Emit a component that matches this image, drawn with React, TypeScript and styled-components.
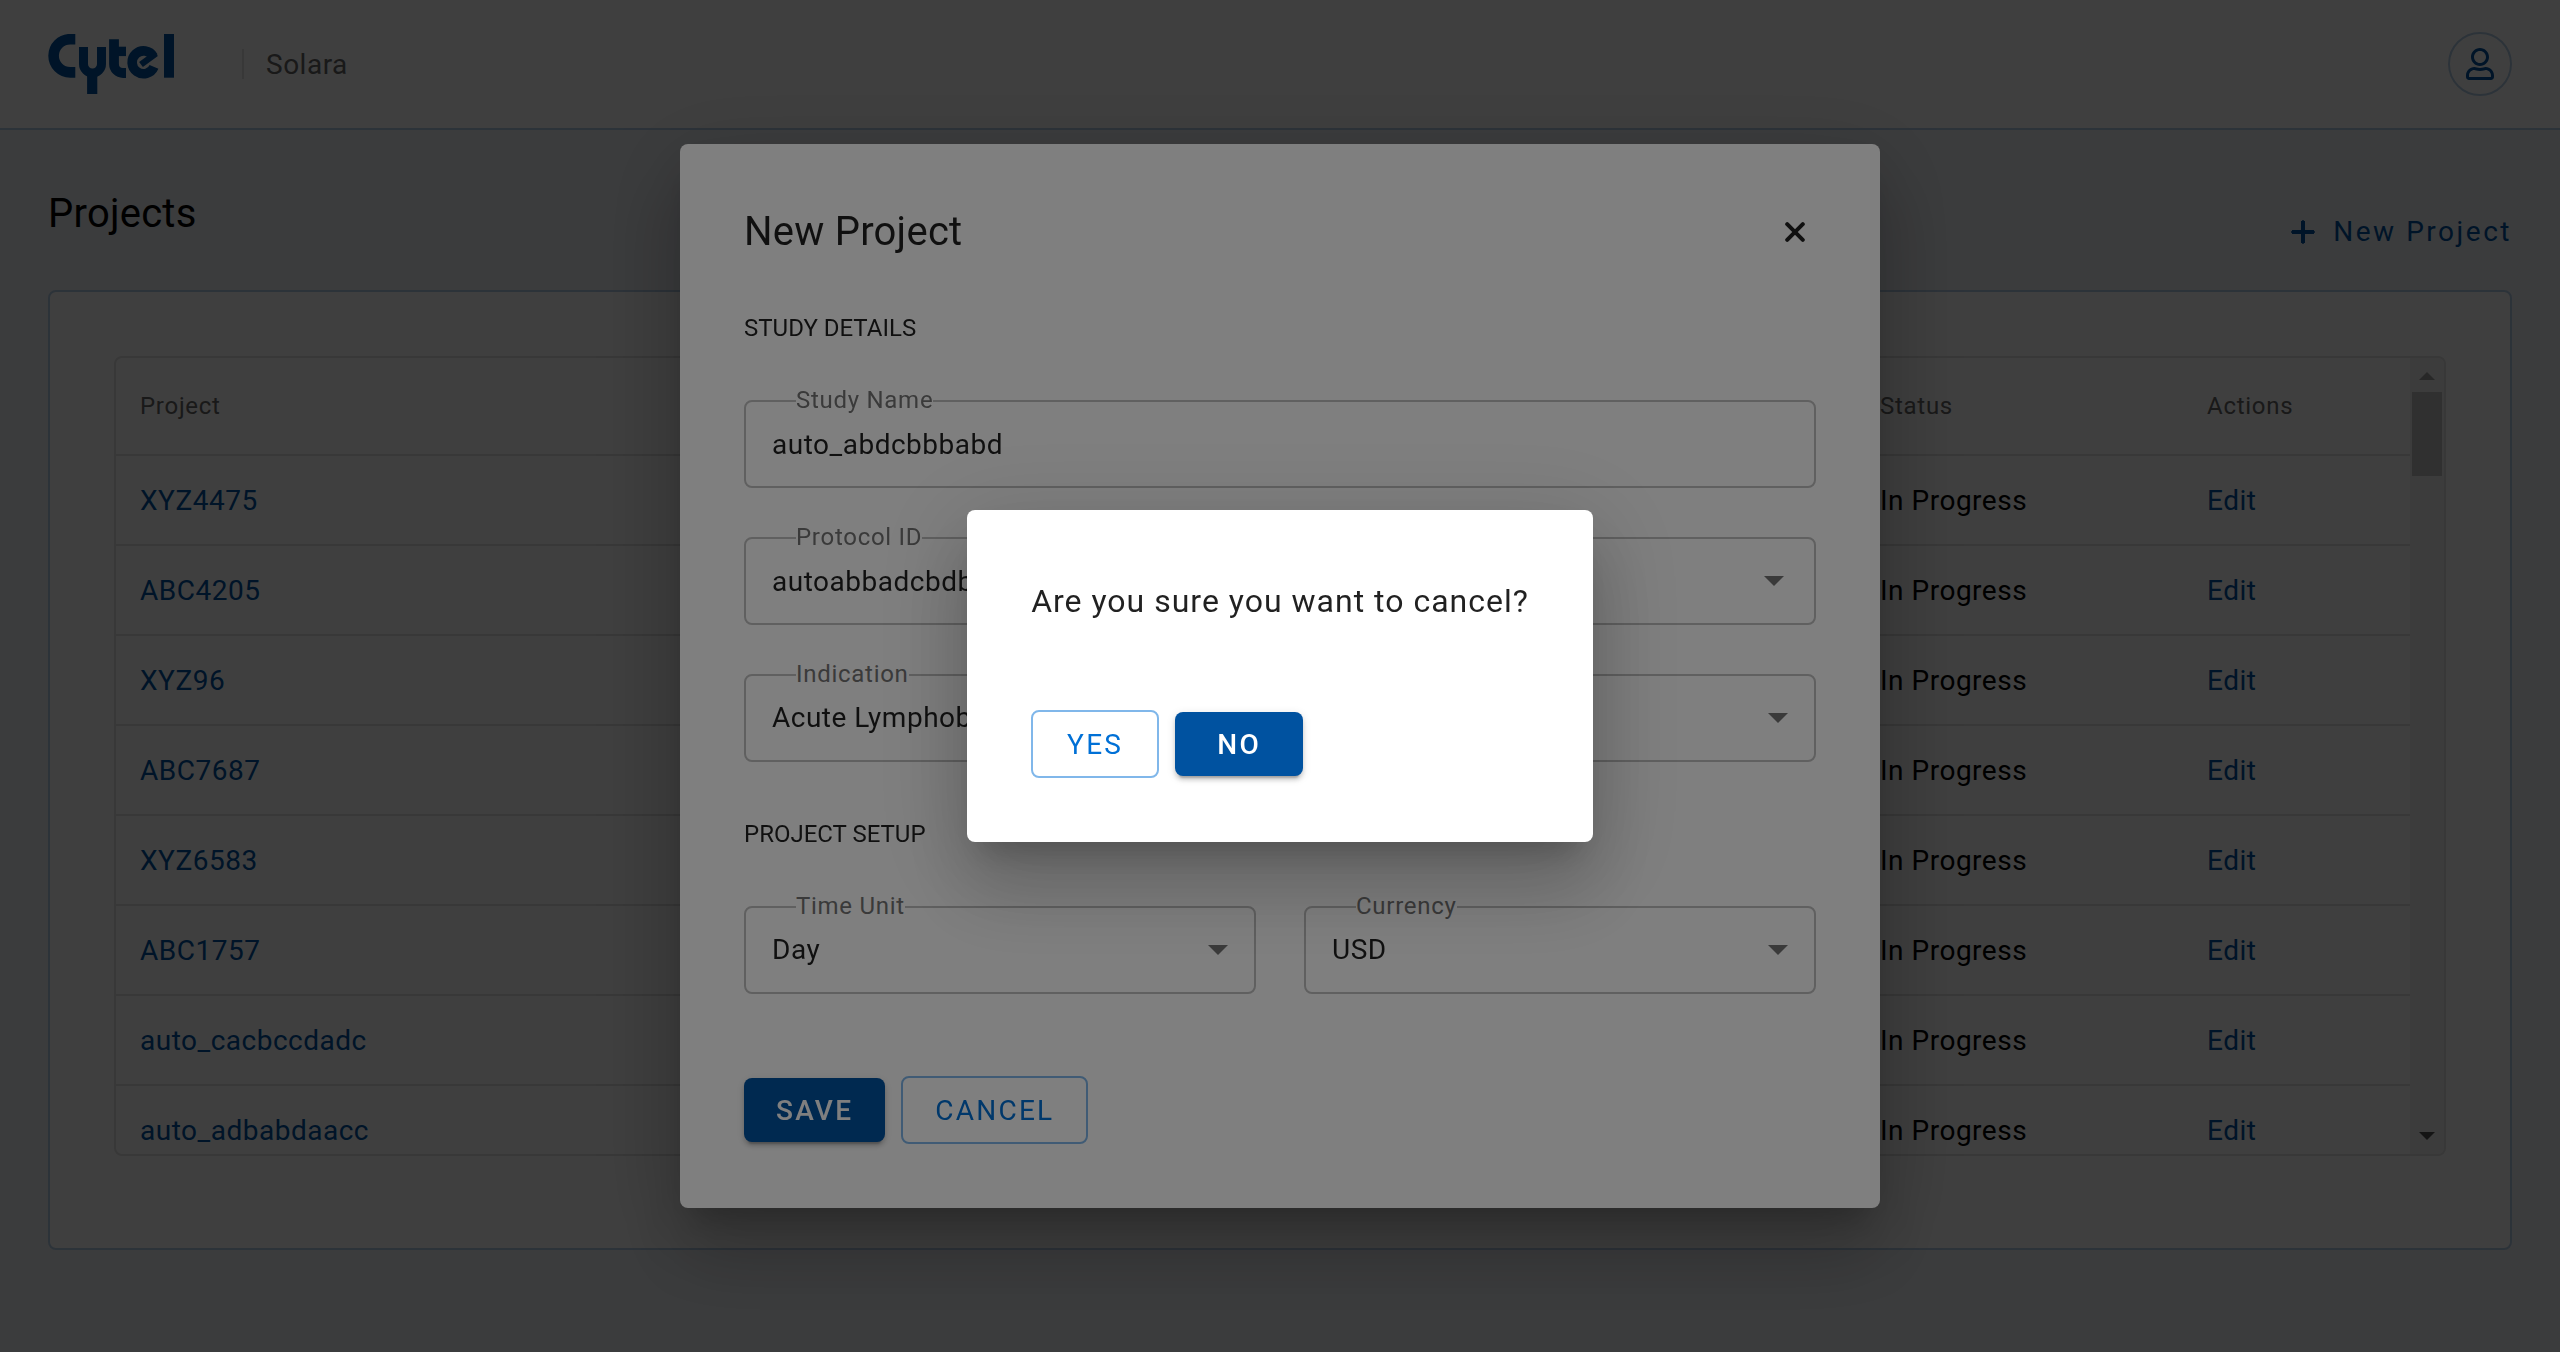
import React from "react";
import styled, { createGlobalStyle, css } from "styled-components";
import { FaRegUser } from "react-icons/fa";

const color = {
  brand: "#0052a0",
  link: "#0070d6",
  linkBorder: "#80b7ea",
  text: "rgba(0, 0, 0, 0.87)",
  muted: "#666666",
  label: "#757575",
  outline: "#c0c0c0",
  panelBorder: "#b3cce6",
  rule: "#e0e0e0",
  page: "#eff2f7",
};

const tracking = {
  heading: "0.006em",
  body: "0.018em",
  label: "0.03em",
  button: "0.08em",
  action: "0.09em",
};

const GlobalStyle = createGlobalStyle`
  *, *::before, *::after { box-sizing: border-box; }
  body {
    margin: 0;
    background: ${color.page};
    color: #000;
    font: 400 28px/40px Roboto, "Liberation Sans", sans-serif;
  }
  h1, h2, h3, p { margin: 0; font-weight: 400; }
  button, input, select { font: inherit; color: inherit; }
`;

const Page = styled.div`
  min-height: 100vh;
`;

const Header = styled.header`
  display: flex;
  align-items: center;
  height: 130px;
  padding: 0 48px;
  background: #fff;
  border-bottom: 2px solid ${color.panelBorder};
`;

const Logo = styled.svg`
  display: block;
  width: 126px;
  height: 60px;
  color: ${color.brand};
`;

const Product = styled.span`
  margin-left: 68px;
  padding: 2px 0 0 22px;
  border-left: 2px solid ${color.rule};
  line-height: 28px;
  letter-spacing: ${tracking.body};
  color: ${color.muted};
`;

const Avatar = styled.button`
  display: grid;
  place-items: center;
  width: 64px;
  height: 64px;
  margin-left: auto;
  padding: 0;
  border: 2px solid ${color.panelBorder};
  border-radius: 50%;
  background: none;
  color: ${color.brand};
  font-size: 32px;
`;

const Main = styled.main`
  padding: 0 48px 48px;
`;

const PageHead = styled.div`
  display: flex;
  justify-content: space-between;
  align-items: flex-end;
  padding: 60px 0 22px;
`;

const PageTitle = styled.h1`
  padding-bottom: 30px;
  font-size: 40px;
  line-height: 48px;
  letter-spacing: ${tracking.heading};
`;

const AddButton = styled.button`
  display: flex;
  align-items: center;
  gap: 18px;
  height: 72px;
  padding: 0;
  border: 0;
  background: none;
  color: ${color.brand};
  letter-spacing: ${tracking.action};
`;

const Panel = styled.section`
  padding: 64px 64px 92px;
  background: #fff;
  border: 2px solid ${color.panelBorder};
  border-radius: 8px;
`;

const TableBox = styled.div`
  display: flex;
  height: 800px;
  border: 2px solid ${color.rule};
  border-radius: 8px;
  overflow: hidden;
`;

const TableView = styled.div`
  flex: 1;
  min-width: 0;
  overflow: hidden;
`;

const Table = styled.table`
  width: 100%;
  table-layout: fixed;
  border-collapse: separate;
  border-spacing: 0;
`;

const cell = css`
  padding: 0;
  border-bottom: 2px solid ${color.rule};
  text-align: left;
  &:first-child {
    padding-left: 24px;
  }
`;

const Th = styled.th<{ $width?: number }>`
  ${cell}
  height: 98px;
  width: ${(p) => (p.$width ? `${p.$width}px` : "auto")};
  font-size: 24px;
  font-weight: 400;
  letter-spacing: ${tracking.label};
  color: ${color.muted};
`;

const Td = styled.td`
  ${cell}
  height: 90px;
  padding-top: 2px;
  letter-spacing: ${tracking.body};
`;

const CellLink = styled.a`
  color: ${color.brand};
  text-decoration: none;
`;

const ScrollTrack = styled.div`
  display: flex;
  flex-direction: column;
  width: 34px;
  background: #f1f1f1;
`;

const ScrollArrow = styled.svg<{ $dim?: boolean }>`
  flex: none;
  width: 34px;
  height: 34px;
  fill: ${(p) => (p.$dim ? "#a3a3a3" : "#505050")};
`;

const ScrollRun = styled.div`
  flex: 1;
  padding: 0 2px;
`;

const ScrollThumb = styled.div`
  height: 84px;
  background: #c1c1c1;
`;

const Scrim = styled.div`
  position: fixed;
  inset: 0;
  display: grid;
  place-items: center;
  background: rgba(0, 0, 0, 0.5);
`;

const Surface = styled.div<{ $width?: number }>`
  width: ${(p) => (p.$width ? `min(${p.$width}px, 94vw)` : "auto")};
  padding: 64px;
  background: #fff;
  border-radius: 8px;
  color: ${color.text};
  box-shadow:
    0 22px 30px -14px rgba(0, 0, 0, 0.2),
    0 48px 76px 6px rgba(0, 0, 0, 0.14),
    0 18px 92px 16px rgba(0, 0, 0, 0.12);
`;

const ModalHead = styled.div`
  display: flex;
  align-items: center;
  justify-content: space-between;
  height: 48px;
  margin-bottom: 58px;
`;

const ModalTitle = styled.h2`
  font-size: 40px;
  line-height: 48px;
  letter-spacing: ${tracking.heading};
`;

const CloseButton = styled.button`
  display: grid;
  place-items: center;
  width: 42px;
  height: 42px;
  padding: 0;
  border: 0;
  background: none;
`;

const SectionTitle = styled.h3`
  font-size: 24px;
  line-height: 28px;
  text-transform: uppercase;
`;

const Fields = styled.div<{ $columns?: number }>`
  display: grid;
  grid-template-columns: repeat(${(p) => p.$columns ?? 1}, minmax(0, 1fr));
  gap: 49px 48px;
  margin: 58px 0;
`;

const FieldBox = styled.div<{ $inset: number }>`
  position: relative;
  display: flex;
  align-items: center;
  height: 88px;
  padding-right: ${(p) => p.$inset}px;
  border: 2px solid ${color.outline};
  border-radius: 8px;
`;

const FieldLabel = styled.label`
  position: absolute;
  top: -16px;
  left: 50px;
  background: #fff;
  font-size: 24px;
  line-height: 28px;
  letter-spacing: ${tracking.label};
  color: ${color.label};
`;

const control = css`
  flex: 1;
  min-width: 0;
  height: 100%;
  padding: 0 26px;
  border: 0;
  outline: 0;
  background: none;
  letter-spacing: ${tracking.body};
`;

const TextInput = styled.input`
  ${control}
`;

const Select = styled.select`
  ${control}
  appearance: none;
`;

const Caret = styled.svg`
  flex: none;
  width: 20px;
  height: 10px;
  fill: #757575;
`;

const StrokeIcon = styled.svg`
  flex: none;
  fill: none;
  stroke: currentColor;
`;

const Actions = styled.div`
  display: flex;
  align-items: center;
  gap: 16px;
  margin-top: 82px;
`;

const Button = styled.button<{ $filled?: boolean }>`
  min-width: 128px;
  height: ${(p) => (p.$filled ? 64 : 68)}px;
  padding: 2px 32px 0;
  border: ${(p) => (p.$filled ? "0" : `2px solid ${color.linkBorder}`)};
  border-radius: 8px;
  background: ${(p) => (p.$filled ? color.brand : "transparent")};
  color: ${(p) => (p.$filled ? "#fff" : color.link)};
  font-weight: ${(p) => (p.$filled ? 500 : 400)};
  letter-spacing: ${tracking.button};
  text-transform: uppercase;
  box-shadow: ${(p) =>
    p.$filled
      ? "0 6px 2px -4px rgba(0,0,0,.2), 0 4px 4px 0 rgba(0,0,0,.14), 0 2px 10px 0 rgba(0,0,0,.12)"
      : "none"};
`;

const Question = styled.p`
  font-size: 32px;
  line-height: 54px;
  letter-spacing: 1px;
`;

const projects = [
  "XYZ4475",
  "ABC4205",
  "XYZ96",
  "ABC7687",
  "XYZ6583",
  "ABC1757",
  "auto_cacbccdadc",
  "auto_adbabdaacc",
];

function CytelLogo() {
  return (
    <Logo viewBox="0 0 126 60" fill="none" stroke="currentColor" role="img" aria-label="Cytel">
      <path d="M27.3 5.2H22.2A16.6 16.6 0 0 0 22.2 38.4H27.3" strokeWidth="10.6" />
      <path d="M35.5 13V30a9 9 0 0 0 18 0V13" strokeWidth="9" />
      <path d="M44.2 37V60" strokeWidth="10.2" />
      <path d="M66 5.2V30a9 9 0 0 0 9 9H78" strokeWidth="9.8" />
      <path d="M66 17.4H78" strokeWidth="9.4" />
      <path d="M105.4 22.6A11.4 11.4 0 1 0 106 32.8" strokeWidth="9.6" />
      <path d="M108 19.5L93 30.5" strokeWidth="6.4" />
      <path d="M121 0V43.7" strokeWidth="10" />
    </Logo>
  );
}

function PlusIcon() {
  return (
    <StrokeIcon width="24" height="24" viewBox="0 0 24 24" strokeWidth="4" aria-hidden="true">
      <path d="M12 1V23M1 12H23" />
      <path d="M12 1V23M1 12H23" strokeWidth="2" strokeLinecap="round" />
    </StrokeIcon>
  );
}

function CloseIcon() {
  return (
    <StrokeIcon width="20" height="20" viewBox="0 0 20 20" strokeWidth="4" strokeLinecap="round" aria-hidden="true">
      <path d="M2.2 2.2L17.8 17.8M17.8 2.2L2.2 17.8" />
    </StrokeIcon>
  );
}

function CaretIcon() {
  return (
    <Caret viewBox="0 0 20 10" aria-hidden="true">
      <path d="M0 0h20L10 10z" />
    </Caret>
  );
}

function SelectField({ id, label, value }: { id: string; label: string; value: string }) {
  return (
    <FieldBox $inset={26}>
      <FieldLabel htmlFor={id}>{label}</FieldLabel>
      <Select id={id} defaultValue={value}>
        <option>{value}</option>
      </Select>
      <CaretIcon />
    </FieldBox>
  );
}

export default function App() {
  return (
    <>
      <GlobalStyle />
      <Page>
        <Header>
          <CytelLogo />
          <Product>Solara</Product>
          <Avatar aria-label="Account">
            <FaRegUser />
          </Avatar>
        </Header>
        <Main>
          <PageHead>
            <PageTitle>Projects</PageTitle>
            <AddButton>
              <PlusIcon />
              New Project
            </AddButton>
          </PageHead>
          <Panel>
            <TableBox>
              <TableView>
                <Table>
                  <thead>
                    <tr>
                      <Th>Project</Th>
                      <Th $width={327}>Status</Th>
                      <Th $width={203}>Actions</Th>
                    </tr>
                  </thead>
                  <tbody>
                    {projects.map((name) => (
                      <tr key={name}>
                        <Td>
                          <CellLink href="#">{name}</CellLink>
                        </Td>
                        <Td>In Progress</Td>
                        <Td>
                          <CellLink href="#">Edit</CellLink>
                        </Td>
                      </tr>
                    ))}
                  </tbody>
                </Table>
              </TableView>
              <ScrollTrack aria-hidden="true">
                <ScrollArrow viewBox="0 0 34 34" $dim>
                  <path d="M9 22h16L17 14z" />
                </ScrollArrow>
                <ScrollRun>
                  <ScrollThumb />
                </ScrollRun>
                <ScrollArrow viewBox="0 0 34 34">
                  <path d="M9 12h16L17 20z" />
                </ScrollArrow>
              </ScrollTrack>
            </TableBox>
          </Panel>
        </Main>
      </Page>

      <Scrim>
        <Surface $width={1200} role="dialog" aria-labelledby="new-project-title">
          <ModalHead>
            <ModalTitle id="new-project-title">New Project</ModalTitle>
            <CloseButton aria-label="Close">
              <CloseIcon />
            </CloseButton>
          </ModalHead>
          <SectionTitle>Study Details</SectionTitle>
          <Fields>
            <FieldBox $inset={0}>
              <FieldLabel htmlFor="study-name">Study Name</FieldLabel>
              <TextInput id="study-name" defaultValue="auto_abdcbbbabd" />
            </FieldBox>
            <FieldBox $inset={30}>
              <FieldLabel htmlFor="protocol-id">Protocol ID</FieldLabel>
              <TextInput id="protocol-id" defaultValue="autoabbadcbdb" />
              <CaretIcon />
            </FieldBox>
            <SelectField id="indication" label="Indication" value="Acute Lymphoblastic Leukemia" />
          </Fields>
          <SectionTitle>Project Setup</SectionTitle>
          <Fields $columns={2}>
            <SelectField id="time-unit" label="Time Unit" value="Day" />
            <SelectField id="currency" label="Currency" value="USD" />
          </Fields>
          <Actions>
            <Button $filled>Save</Button>
            <Button>Cancel</Button>
          </Actions>
        </Surface>
      </Scrim>

      <Scrim>
        <Surface role="alertdialog" aria-labelledby="confirm-text">
          <Question id="confirm-text">Are you sure you want to cancel?</Question>
          <Actions>
            <Button>Yes</Button>
            <Button $filled>No</Button>
          </Actions>
        </Surface>
      </Scrim>
    </>
  );
}
